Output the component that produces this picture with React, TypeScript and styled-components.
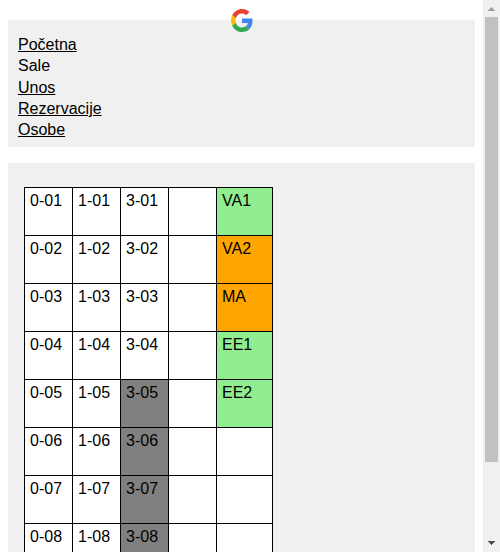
import React from "react";
import styled, { createGlobalStyle } from "styled-components";

const GlobalStyle = createGlobalStyle`
  html, body { margin: 0; height: 100%; overflow: hidden; background: #fff; }
  body { font: 16px "Liberation Sans", Arial, sans-serif; color: #000; }
  *, *::before, *::after { box-sizing: border-box; }
`;

const Window = styled.div`
  display: flex;
  height: 552px;
  overflow: hidden;
`;

const Page = styled.div`
  flex: 1;
  padding: 20px 8px 0;
  display: flex;
  flex-direction: column;
  gap: 16px;
`;

const Header = styled.header`
  position: relative;
  flex: none;
  height: 127px;
  padding: 14px 10px 0;
  background: #f0f0f0;
`;

const Logo = styled.svg`
  position: absolute;
  top: -11px;
  left: 223px;
  width: 22px;
  height: 23px;
`;

const Menu = styled.nav`
  display: flex;
  flex-direction: column;
  align-items: flex-start;
`;

const MenuItem = styled.a<{ $current?: boolean }>`
  color: #000;
  line-height: 21.33px;
  text-decoration: ${(p) => (p.$current ? "none" : "underline")};
`;

const Main = styled.main`
  flex: none;
  height: 420px;
  padding: 24px 16px 0;
  background: #f0f0f0;
`;

const RoomGrid = styled.div`
  display: grid;
  grid-template-columns: repeat(4, 48px) 56px;
  grid-auto-rows: 48px;
  width: 249px;
  border: solid #000;
  border-width: 1px 0 0 1px;
`;

const Room = styled.div<{ $fill: string }>`
  padding: 4px 0 0 5px;
  line-height: 18px;
  white-space: nowrap;
  background: ${(p) => p.$fill};
  background-clip: padding-box;
  border: solid #000;
  border-width: 0 1px 1px 0;
`;

const Scrollbar = styled.div`
  flex: none;
  width: 17px;
  height: 552px;
  display: flex;
  flex-direction: column;
  align-items: center;
  background: #f0f0f0;
`;

const ArrowButton = styled.svg`
  flex: none;
  width: 17px;
  height: 17px;
`;

const Track = styled.div`
  flex: 1;
`;

const Thumb = styled.div`
  width: 13px;
  height: 445px;
  background: #c1c1c1;
`;

const FREE = "lightgreen";
const BUSY = "orange";
const CLOSED = "gray";

const menu = ["Početna", "Sale", "Unos", "Rezervacije", "Osobe"];

const labs: { name: string; fill: string }[] = [
  { name: "VA1", fill: FREE },
  { name: "VA2", fill: BUSY },
  { name: "MA", fill: BUSY },
  { name: "EE1", fill: FREE },
  { name: "EE2", fill: FREE },
];

const rows = Array.from({ length: 8 }, (_, i) => {
  const n = `0${i + 1}`;
  return [
    { name: `0-${n}`, fill: "white" },
    { name: `1-${n}`, fill: "white" },
    { name: `3-${n}`, fill: i >= 4 ? CLOSED : "white" },
    { name: "", fill: "white" },
    labs[i] ?? { name: "", fill: "white" },
  ];
});

export default function App() {
  return (
    <>
      <GlobalStyle />
      <Window>
        <Page>
          <Header>
            <Logo viewBox="0 0 48 48" preserveAspectRatio="none" aria-label="Google">
              <path fill="#EA4335" d="M24 9.5c3.54 0 6.71 1.22 9.21 3.6l6.85-6.85C35.9 2.38 30.47 0 24 0 14.62 0 6.51 5.38 2.56 13.22l7.98 6.19C12.43 13.72 17.74 9.5 24 9.5z" />
              <path fill="#4285F4" d="M46.98 24.55c0-1.57-.15-3.09-.38-4.55H24v9.02h12.94c-.58 2.96-2.26 5.48-4.78 7.18l7.73 6c4.51-4.18 7.09-10.36 7.09-17.65z" />
              <path fill="#FBBC05" d="M10.53 28.59c-.48-1.45-.76-2.99-.76-4.59s.27-3.14.76-4.59l-7.98-6.19C.92 16.46 0 20.12 0 24c0 3.88.92 7.54 2.56 10.78l7.97-6.19z" />
              <path fill="#34A853" d="M24 48c6.48 0 11.93-2.13 15.89-5.81l-7.73-6c-2.15 1.45-4.92 2.3-8.16 2.3-6.26 0-11.57-4.22-13.47-9.91l-7.98 6.19C6.51 42.62 14.62 48 24 48z" />
            </Logo>
            <Menu>
              {menu.map((label) => (
                <MenuItem key={label} $current={label === "Sale"}>{label}</MenuItem>
              ))}
            </Menu>
          </Header>
          <Main>
            <RoomGrid>
              {rows.flatMap((row, r) =>
                row.map((room, c) => (
                  <Room key={`${r}-${c}`} $fill={room.fill}>{room.name}</Room>
                ))
              )}
            </RoomGrid>
          </Main>
        </Page>
        <Scrollbar>
          <ArrowButton viewBox="0 0 17 17" shapeRendering="crispEdges">
            <path fill="#a3a3a3" d="M8 7h1v1h1v1h1v1h1v1H5v-1h1V9h1V8h1z" />
          </ArrowButton>
          <Track>
            <Thumb />
          </Track>
          <ArrowButton viewBox="0 0 17 17" shapeRendering="crispEdges">
            <path fill="#505050" d="M5 6h7v1h-1v1h-1v1H9v1H8V9H7V8H6V7H5z" />
          </ArrowButton>
        </Scrollbar>
      </Window>
    </>
  );
}
